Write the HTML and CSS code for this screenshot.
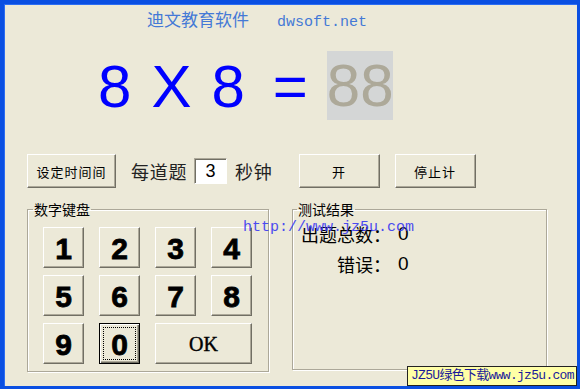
FILE: index.html
```html
<!DOCTYPE html>
<html>
<head>
	<meta charset="utf-8">
	<title>乘法口算</title>
	<link rel="stylesheet" href="styles.css">
</head>
<body>
<div class="window">
	<div class="title"><span>迪文教育软件</span><span class="site">dwsoft.net</span></div>

	<div class="equation">
		<span class="term">8</span>
		<span class="term">X</span>
		<span class="term">8</span>
		<span class="term eq">=</span>
		<span class="answer">88</span>
	</div>

	<div class="controls">
		<button class="btn btn-set">设定时间间</button>
		<span class="label">每道题</span>
		<input class="seconds" type="text" value="3" readonly>
		<span class="label">秒钟</span>
		<button class="btn btn-go">开</button>
		<button class="btn btn-stop">停止计</button>
	</div>

	<div class="groups">
		<fieldset class="group keypad">
			<legend>数字键盘</legend>
			<div class="keys">
				<button class="key">1</button>
				<button class="key">2</button>
				<button class="key">3</button>
				<button class="key">4</button>
				<button class="key">5</button>
				<button class="key">6</button>
				<button class="key">7</button>
				<button class="key">8</button>
				<button class="key">9</button>
				<button class="key focus">0</button>
				<button class="key ok">OK</button>
			</div>
		</fieldset>
		<fieldset class="group result">
			<legend>测试结果</legend>
			<div class="stats">
				<span class="name">出题总数：</span><span class="value">0</span>
				<span class="name">错误：</span><span class="value">0</span>
			</div>
		</fieldset>
	</div>

	<div class="watermark">http://www.jz5u.com</div>
	<div class="badge">JZ5U绿色下载www.jz5u.com</div>
</div>
</body>
</html>
```

FILE: styles.css
```css
*{ margin: 0; padding: 0; box-sizing: border-box; }
body{ background: #ECE9D8; }
.window{
	position: relative;
	width: 580px; height: 389px;
	border-style: solid;
	border-color: #0A4FE2;
	border-width: 4px 3px 3px 4px;
	box-shadow: inset 1px 1px 0 #2C6DF2;
	background: #ECE9D8;
	font-family: "Noto Sans CJK SC", sans-serif;
	color: #000;
}

/* 标题 */
.title{
	margin-top: 7px;
	padding-left: 143px;
	height: 20px;
	line-height: 20px;
	font-size: 17px;
	color: #4479D6;
	font-family: "Liberation Serif", "Noto Sans CJK SC", serif;
}
.title .site{
	margin-left: 28px;
	font-family: "Liberation Mono", monospace;
	font-size: 15px;
}

/* 算式 */
.equation{
	display: flex;
	align-items: center;
	gap: 20px;
	margin-top: 20px;
	padding-left: 94px;
	height: 69px;
	font-family: "Liberation Sans", Arial, sans-serif;
	font-size: 60px;
	line-height: 69px;
	color: #0000FF;
}
.equation .eq{ margin-left: 8px; }
.answer{
	width: 66px; height: 69px;
	margin-left: -1px;
	background: #D4D6D6;
	color: #ADA999;
	text-align: center;
}
.term{ margin-top: 2px; }

/* 控制行 */
.controls{
	display: flex;
	align-items: center;
	margin-top: 34px;
	padding-left: 23px;
	height: 34px;
}
.btn{
	height: 34px;
	background: #ECE9D8;
	border: 1px solid;
	border-color: #fff #716F64 #716F64 #fff;
	box-shadow: inset -1px -1px 0 #ACA899;
	font-family: "Noto Sans CJK SC", sans-serif;
	font-size: 13px;
	letter-spacing: 1px;
	color: #000;
}
.btn-set{ width: 89px; margin-right: 15px; }
.btn-go{ width: 81px; margin-left: 26px; }
.btn-stop{ width: 81px; margin-left: 15px; }
.label{
	font-size: 18px;
	line-height: 24px;
	letter-spacing: 0.7px;
	color: #222;
}
.seconds{
	width: 33px; height: 26px;
	margin: 0 8px 0 7px;
	border: 1px solid;
	border-color: #ACA899 #fff #fff #ACA899;
	box-shadow: inset 1px 1px 0 #716F64;
	background: #fff;
	text-align: center;
	font-family: "Liberation Sans", Arial, sans-serif;
	font-size: 18px;
	color: #000;
	outline: none;
}

/* 分组框 */
.groups{
	display: flex;
	align-items: stretch;
	gap: 23px;
	margin-top: 13px;
	padding-left: 23px;
}
.group{
	border: 1px solid #ACA899;
	box-shadow: 1px 1px 0 #fff, inset 1px 1px 0 #fff;
}
.group legend{
	margin-left: -10px;
	padding: 0 1px;
	font-size: 14px;
	line-height: 16px;
	color: #000;
}
.keypad{ width: 242px; height: 171px; padding: 10px 15px 0; }
.result{ width: 255px; height: 169px; padding: 2px 8px 0; }
.result legend{ margin-left: -4px; }

.keys{
	display: grid;
	grid-template-columns: repeat(4, 41px);
	grid-auto-rows: 41px;
	column-gap: 15px;
	row-gap: 7px;
}
.key{
	background: #ECE9D8;
	border: 1px solid;
	border-color: #fff #716F64 #716F64 #fff;
	box-shadow: inset -1px -1px 0 #ACA899;
	font-family: "Liberation Sans", Arial, sans-serif;
	font-weight: bold;
	font-size: 30px;
	-webkit-text-stroke: 0.8px #000;
	color: #000;
	padding-top: 2px;
}
.key.focus{
	border: 1px solid #000;
	box-shadow: inset 1px 1px 0 #fff, inset -1px -1px 0 #716F64, inset -2px -2px 0 #ACA899;
	outline: 1px dotted #000;
	outline-offset: -5px;
}
.key.ok{
	grid-column: span 2;
	font-family: "Liberation Serif", "Times New Roman", serif;
	font-size: 20px;
	font-weight: normal;
	-webkit-text-stroke: 0.4px #000;
}

.stats{
	display: grid;
	grid-template-columns: auto auto;
	justify-content: start;
	font-size: 18px;
	line-height: 30px;
}
.stats .name{ text-align: right; }
.stats .value{
	padding-left: 7px;
	font-family: "Liberation Sans", Arial, sans-serif;
	font-size: 19px;
}

/* 水印 */
.watermark{
	position: absolute;
	left: 239px; top: 215px;
	font-family: "Liberation Mono", monospace;
	font-size: 15px;
	line-height: 17px;
	color: #3A3AF2;
	opacity: 0.9;
}
.badge{
	position: absolute;
	right: 0; bottom: 0;
	width: 170px; height: 20px;
	border: 1px solid #222;
	background: #FFFFA6;
	color: #1A1A9A;
	font-family: "Liberation Mono", "Noto Sans CJK SC", monospace;
	font-size: 13px;
	line-height: 18px;
	letter-spacing: -0.7px;
	padding-left: 3px;
	white-space: nowrap;
	overflow: hidden;
}
```
